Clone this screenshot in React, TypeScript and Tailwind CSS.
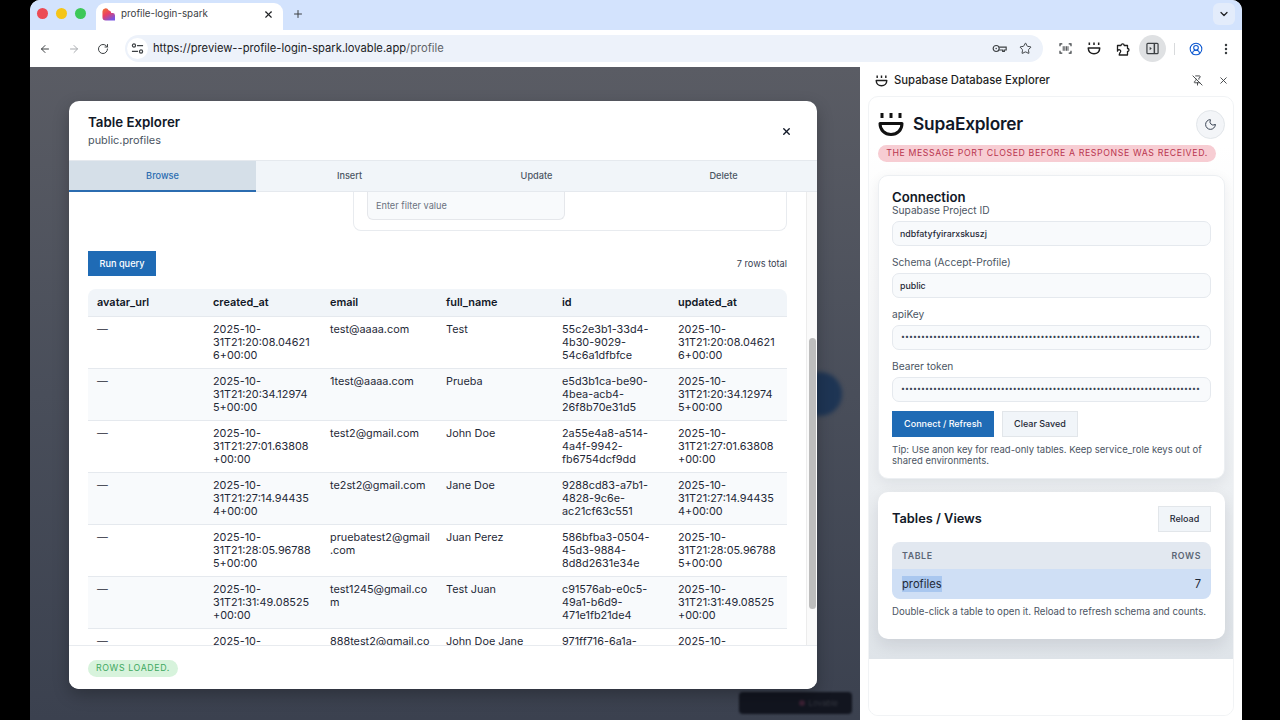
import { ArrowLeft, ArrowRight, ChevronDown, MoreVertical, Moon, PinOff, Plus, RotateCw, Star, X, CircleUserRound } from "lucide-react";

const ROWS = [
  { created: "2025-10-31T21:20:08.046216+00:00", email: "test@aaaa.com", name: "Test", id: "55c2e3b1-33d4-4b30-9029-54c6a1dfbfce" },
  { created: "2025-10-31T21:20:34.129745+00:00", email: "1test@aaaa.com", name: "Prueba", id: "e5d3b1ca-be90-4bea-acb4-26f8b70e31d5" },
  { created: "2025-10-31T21:27:01.63808+00:00", email: "test2@gmail.com", name: "John Doe", id: "2a55e4a8-a514-4a4f-9942-fb6754dcf9dd" },
  { created: "2025-10-31T21:27:14.944354+00:00", email: "te2st2@gmail.com", name: "Jane Doe", id: "9288cd83-a7b1-4828-9c6e-ac21cf63c551" },
  { created: "2025-10-31T21:28:05.967885+00:00", email: "pruebatest2@gmail.com", name: "Juan Perez", id: "586bfba3-0504-45d3-9884-8d8d2631e34e" },
  { created: "2025-10-31T21:31:49.08525+00:00", email: "test1245@gmail.com", name: "Test Juan", id: "c91576ab-e0c5-49a1-b6d9-471e1fb21de4" },
  { created: "2025-10-31T21:33:12.50412+00:00", email: "888test2@gmail.com", name: "John Doe Jane", id: "971ff716-6a1a-4c02-8e11-0f3b7c2d9a10" },
];

const COLUMNS = ["avatar_url", "created_at", "email", "full_name", "id", "updated_at"];

const TABS = ["Browse", "Insert", "Update", "Delete"];

const DOTS = "•".repeat(75);

function PlugLogo({ className }: { className: string }) {
  return (
    <svg viewBox="0 0 26 25" fill="none" stroke="currentColor" className={className} aria-hidden>
      <path d="M2 11.5h22c0 6.5-4.6 11-11 11s-11-4.5-11-11Z" strokeWidth="3" strokeLinejoin="round" />
      <path d="M4 1v5M13 1v5M22 1v5" strokeWidth="3" />
    </svg>
  );
}

function Favicon() {
  return (
    <svg viewBox="0 0 14 14" className="w-[13px] h-[13px]" aria-hidden>
      <defs>
        <linearGradient id="lovable" x1="0" y1="0" x2="0.6" y2="1">
          <stop offset="0" stopColor="#f0742f" />
          <stop offset="0.5" stopColor="#ea3f63" />
          <stop offset="1" stopColor="#7a55e0" />
        </linearGradient>
      </defs>
      <path d="M0.5 4a3.5 3.5 0 0 1 6.6-1.7A3.4 3.4 0 0 1 10 5.5h1.3A2.6 2.6 0 0 1 14 8v5.5H4A3.5 3.5 0 0 1 0.5 10Z" fill="url(#lovable)" />
    </svg>
  );
}

function TuneIcon() {
  return (
    <svg viewBox="0 0 14 14" fill="none" stroke="#3c4043" strokeWidth="1.3" className="w-[13px] h-[13px]" aria-hidden>
      <circle cx="3.2" cy="3.8" r="1.7" />
      <path d="M6.5 3.8h6.5M1 10.2h6.5" />
      <circle cx="10.8" cy="10.2" r="1.7" />
    </svg>
  );
}

function KeyIcon() {
  return (
    <svg viewBox="0 0 18 12" fill="none" stroke="#3c4043" strokeWidth="1.4" className="w-[15px] h-[11px]" aria-hidden>
      <circle cx="5" cy="6" r="3.6" />
      <circle cx="5" cy="6" r="0.9" fill="#3c4043" stroke="none" />
      <path d="M8.6 4.4H17v3.4h-2.2v1.6h-2V7.8H8.6" />
    </svg>
  );
}

function ScanIcon() {
  return (
    <svg viewBox="0 0 14 12" fill="none" stroke="#3c4043" strokeWidth="1.3" className="w-[13px] h-[11px]" aria-hidden>
      <path d="M3.5 1H1v2.5M10.5 1H13v2.5M3.5 11H1V8.5M10.5 11H13V8.5" />
      <path d="M4.5 3.5v5M6.3 3.5v5M8 3.5v5M9.7 3.5v5" strokeWidth="1" />
    </svg>
  );
}

function ExtensionIcon() {
  return (
    <svg viewBox="0 0 14 14" fill="none" stroke="#1f1f1f" strokeWidth="1.3" strokeLinejoin="round" className="w-[14px] h-[14px]" aria-hidden>
      <path d="M1.5 3.5H5a1.6 1.6 0 1 1 3.2 0h3.3v3a1.5 1.5 0 1 1 0 3v3.5H3.2l.6-2.2a1.6 1.6 0 1 0-2.3-1.6Z" />
    </svg>
  );
}

function SidePanelIcon() {
  return (
    <svg viewBox="0 0 14 14" fill="none" stroke="#3c4043" strokeWidth="1.3" className="w-[13px] h-[13px]" aria-hidden>
      <rect x="1" y="1.5" width="12" height="11" rx="1" />
      <path d="M9 1.5v11" strokeWidth="1.6" />
      <path d="M4 5l2.2 2L4 9Z" fill="#3c4043" stroke="none" />
    </svg>
  );
}

function BrowserChrome() {
  return (
    <>
      {/* Tab strip */}
      <div className="h-[30px] shrink-0 bg-[#d3e3fd] flex items-end px-[7px]">
        <div className="flex items-center gap-[8px] h-[30px] pb-[3px]">
          <span className="w-[11px] h-[11px] rounded-full bg-[#ec4b55]" />
          <span className="w-[11px] h-[11px] rounded-full bg-[#f5c518]" />
          <span className="w-[11px] h-[11px] rounded-full bg-[#3dc858]" />
        </div>
        <div className="ml-[10px] w-[187px] h-[27px] bg-white rounded-t-[9px] flex items-center pl-[6px] pr-[9px] pb-[5px]">
          <Favicon />
          <span className="ml-[6px] text-[9.8px] text-[#3c4043] flex-1">profile-login-spark</span>
          <X className="w-[11px] h-[11px] text-[#202124]" strokeWidth={2.5} />
        </div>
        <Plus className="ml-[9px] mb-[10px] w-[12px] h-[12px] text-[#3c4043]" strokeWidth={2} />
        <div className="ml-auto mb-[5px] w-[22px] h-[22px] rounded-[6px] bg-[#e3ecfb] flex items-center justify-center">
          <ChevronDown className="w-[12px] h-[12px] text-[#202124]" strokeWidth={2.5} />
        </div>
      </div>
      {/* Toolbar */}
      <div className="h-[37px] shrink-0 bg-white flex items-center pl-[9px]">
        <ArrowLeft className="w-[12px] h-[12px] text-[#3c4043]" strokeWidth={2} />
        <ArrowRight className="ml-[17px] w-[12px] h-[12px] text-[#a8abaf]" strokeWidth={2} />
        <RotateCw className="ml-[17px] w-[12px] h-[12px] text-[#3c4043]" strokeWidth={2} />
        <div className="ml-[16px] w-[918px] h-[27px] rounded-full bg-[#edf2fa] flex items-center pl-[2px] pr-[11px]">
          <span className="w-[21px] h-[21px] rounded-full bg-white flex items-center justify-center">
            <TuneIcon />
          </span>
          <span className="ml-[5px] text-[11.2px] text-[#202124] flex-1">
            https://preview--profile-login-spark.lovable.app<span className="text-[#5f6368]">/profile</span>
          </span>
          <KeyIcon />
          <Star className="ml-[12px] w-[13px] h-[13px] text-[#3c4043]" strokeWidth={1.8} />
        </div>
        <div className="ml-[16px] flex items-center">
          <ScanIcon />
          <PlugLogo className="ml-[15px] w-[14px] h-[13px] text-[#1f1f1f]" />
          <span className="ml-[15px]">
            <ExtensionIcon />
          </span>
          <span className="ml-[9px] w-[27px] h-[27px] rounded-full bg-[#dfe1e3] flex items-center justify-center">
            <SidePanelIcon />
          </span>
          <span className="ml-[8px] w-px h-[12px] bg-[#d8dadc]" />
          <CircleUserRound className="ml-[14px] w-[14px] h-[14px] text-[#0b57d0]" strokeWidth={1.8} />
          <MoreVertical className="ml-[16px] w-[14px] h-[14px] text-[#3c4043]" strokeWidth={2.2} />
        </div>
      </div>
    </>
  );
}

function TableExplorer() {
  return (
    <div className="relative w-[748px] h-[588px] bg-white rounded-[10px] flex flex-col overflow-hidden shadow-[0_6px_16px_rgba(0,0,0,0.25)]">
      <div className="h-[59px] shrink-0 flex items-start justify-between pl-[19px] pr-[25px] pt-[13px]">
        <div>
          <h2 className="text-[13.3px] leading-[17px] font-semibold text-[#111827]">Table Explorer</h2>
          <p className="text-[10.9px] leading-[16px] mt-[1px] text-[#4b5563]">public.profiles</p>
        </div>
        <X className="mt-[12px] w-[11px] h-[11px] text-[#111827]" strokeWidth={3} />
      </div>

      {/* Tabs */}
      <div className="h-[32px] shrink-0 grid grid-cols-4 bg-[#f1f5f9] border-t border-b border-[#e5e9ee]">
        {TABS.map((tab, i) => (
          <div
            key={tab}
            className={
              i === 0
                ? "flex items-center justify-center text-[9.2px] font-medium text-[#2b6cb0] bg-[#d5dfe8] border-b-2 border-[#2b6cb0] -mb-px"
                : "flex items-center justify-center text-[9.2px] font-medium text-[#4b5563]"
            }
          >
            {tab}
          </div>
        ))}
      </div>

      {/* Scrolled body */}
      <div className="relative flex-1 overflow-hidden pl-[19px] pr-[30px]">
        <div className="ml-[265px] h-[39px] border-l border-r border-b border-[#e8ebef] rounded-b-[8px] pl-[13px]">
          <div className="w-[198px] h-[28px] bg-[#f8fafc] border-l border-r border-b border-[#e5e7eb] rounded-b-[6px] flex items-center pl-[8px] text-[9.2px] text-[#6b7280]">
            Enter filter value
          </div>
        </div>
        <div className="mt-[20px] flex items-center justify-between">
          <button className="w-[68px] h-[25px] bg-[#1f6bb5] text-white text-[9.2px] font-medium">Run query</button>
          <span className="text-[9.2px] text-[#374151]">7 rows total</span>
        </div>
        <div className="mt-[13px] rounded-t-[8px] overflow-hidden">
          <table className="w-full table-fixed text-[10.85px] leading-[13px] text-[#1f2937]">
            <colgroup>
              <col className="w-[116px]" />
              <col className="w-[117px]" />
              <col className="w-[116px]" />
              <col className="w-[116px]" />
              <col className="w-[116px]" />
              <col className="w-[118px]" />
            </colgroup>
            <thead>
              <tr className="h-[27px] bg-[#f1f5f9] border-b border-[#e5e9ee]">
                {COLUMNS.map((col) => (
                  <th key={col} className="px-[9px] text-left font-semibold text-[10.9px] text-[#111827]">
                    {col}
                  </th>
                ))}
              </tr>
            </thead>
            <tbody>
              {ROWS.map((row, i) => (
                <tr key={row.id} className={i % 2 ? "bg-[#f8fafc] border-b border-[#e5e9ee]" : "bg-white border-b border-[#e5e9ee]"}>
                  <td className="px-[9px] pt-[6px] pb-[6px] h-[52px] align-top">—</td>
                  <td className="px-[9px] pt-[6px] pb-[6px] align-top [overflow-wrap:anywhere]">{row.created}</td>
                  <td className="pl-[9px] pr-[6px] pt-[6px] pb-[6px] align-top [overflow-wrap:anywhere]">{row.email}</td>
                  <td className="px-[9px] pt-[6px] pb-[6px] align-top">{row.name}</td>
                  <td className="px-[9px] pt-[6px] pb-[6px] align-top [overflow-wrap:anywhere]">{row.id}</td>
                  <td className="pl-[9px] pr-[11px] pt-[6px] pb-[6px] align-top [overflow-wrap:anywhere]">{row.created}</td>
                </tr>
              ))}
            </tbody>
          </table>
        </div>
        {/* Scrollbar */}
        <div className="absolute right-0 top-0 bottom-0 w-[11px] bg-[#fafafa] border-l border-[#ececec]">
          <div className="absolute left-[2px] top-[146px] w-[7px] h-[271px] rounded-full bg-[#bdbdbd]" />
        </div>
      </div>

      <div className="h-[44px] shrink-0 bg-white border-t border-[#e8ebef] flex items-center pl-[19px] pt-[1px]">
        <span className="h-[17px] px-[8px] rounded-full bg-[#d7f3dc] flex items-center text-[8.8px] tracking-[0.07em] text-[#3ea860]">
          ROWS LOADED.
        </span>
      </div>
    </div>
  );
}

function Field({ label, value, secret }: { label: string; value: string; secret?: boolean }) {
  return (
    <div className="mb-[9px]">
      <label className="block text-[10.2px] leading-[14px] text-[#4b5563]">{label}</label>
      <div
        className={
          secret
            ? "mt-[4px] h-[25px] rounded-[7px] bg-[#f8fafc] border border-[#e5e9ee] flex items-center pl-[8px] text-[7px] tracking-[0.05px] text-[#374151] overflow-hidden whitespace-nowrap"
            : "mt-[4px] h-[25px] rounded-[7px] bg-[#f8fafc] border border-[#e5e9ee] flex items-center pl-[7px] text-[8.8px] font-medium text-[#1f2937]"
        }
      >
        {value}
      </div>
    </div>
  );
}

function SidePanel() {
  return (
    <div className="w-[382px] shrink-0 bg-white flex flex-col">
      <div className="h-[26px] shrink-0 flex items-center pl-[15px] pr-[13px] pt-[1px]">
        <PlugLogo className="w-[13px] h-[12px] text-[#1f1f1f]" />
        <span className="ml-[6px] text-[11.3px] font-medium text-[#1f1f1f] flex-1">Supabase Database Explorer</span>
        <PinOff className="w-[11px] h-[11px] text-[#3c4043]" strokeWidth={2} />
        <X className="ml-[15px] w-[11px] h-[11px] text-[#3c4043]" strokeWidth={2} />
      </div>
      <div className="flex-1 mx-[8px] mt-[3px] mb-[4px] rounded-[10px] border border-[#f1f3f5] flex flex-col overflow-hidden">
        <div className="h-[48px] shrink-0 flex items-center pl-[9px] pr-[8px] pt-[6px]">
          <PlugLogo className="w-[26px] h-[25px] text-[#111]" />
          <span className="ml-[9px] text-[17.3px] font-semibold tracking-[-0.2px] text-[#111827] flex-1">SupaExplorer</span>
          <span className="w-[29px] h-[29px] rounded-full bg-[#f3f5f8] border border-[#e2e6ea] flex items-center justify-center">
            <Moon className="w-[13px] h-[13px] text-[#374151]" strokeWidth={1.8} />
          </span>
        </div>
        <div className="flex-1 flex flex-col bg-gradient-to-b from-white via-[#f2f4f6] to-[#dfe4e9]">
          <div className="ml-[9px] w-[338px] h-[17px] rounded-full bg-[#f7cdd3] flex items-center justify-center text-[8.75px] tracking-[0.07em] text-[#b9354f] whitespace-nowrap">
            THE MESSAGE PORT CLOSED BEFORE A RESPONSE WAS RECEIVED.
          </div>
          <div className="ml-[9px] mr-[8px] mt-[13px] h-[304px] bg-white rounded-[10px] border border-[#eceff2] px-[13px] pt-[13px] shadow-[0_4px_14px_rgba(15,23,42,0.07)]">
            <h3 className="text-[13.2px] leading-[16px] font-semibold text-[#111827]">Connection</h3>
            <div className="mt-[-2px]">
              <Field label="Supabase Project ID" value="ndbfatyfyirarxskuszj" />
              <Field label="Schema (Accept-Profile)" value="public" />
              <Field label="apiKey" value={DOTS} secret />
              <Field label="Bearer token" value={DOTS} secret />
            </div>
            <div className="flex gap-[8px] mt-[8px]">
              <button className="w-[102px] h-[26px] bg-[#1f6bb5] text-white text-[9px] font-medium">Connect / Refresh</button>
              <button className="w-[76px] h-[26px] bg-[#f1f5f9] border border-[#e2e6ea] text-[#1f2937] text-[9px] font-medium">Clear Saved</button>
            </div>
            <p className="mt-[7px] text-[9.5px] leading-[11px] text-[#4b5563]">
              Tip: Use anon key for read-only tables. Keep service_role keys out of shared environments.
            </p>
          </div>
          <div className="ml-[9px] mr-[8px] mt-[13px] mb-[20px] h-[147px] bg-white rounded-[10px] px-[14px] pt-[14px] shadow-[0_6px_16px_rgba(15,23,42,0.1)]">
            <div className="flex items-center justify-between">
              <h3 className="text-[12.8px] font-semibold text-[#111827]">Tables / Views</h3>
              <button className="w-[53px] h-[26px] bg-[#f1f5f9] border border-[#e2e6ea] text-[9px] font-medium text-[#1f2937]">Reload</button>
            </div>
            <div className="mt-[10px] rounded-[8px] overflow-hidden">
              <div className="h-[27px] bg-[#e2e8f0] flex items-center justify-between px-[10px] text-[8.8px] font-semibold tracking-[0.07em] text-[#5b6675]">
                <span>TABLE</span>
                <span>ROWS</span>
              </div>
              <div className="h-[30px] bg-[#cfdff5] flex items-center justify-between px-[10px] text-[11.2px] text-[#1f2937]">
                <span className="bg-[#a9c7ef]">profiles</span>
                <span>7</span>
              </div>
            </div>
            <p className="mt-[6px] text-[9.65px] text-[#4b5563] whitespace-nowrap">
              Double-click a table to open it. Reload to refresh schema and counts.
            </p>
          </div>
        </div>
        <div className="h-[57px] shrink-0 bg-white" />
      </div>
    </div>
  );
}

export default function App() {
  return (
    <div className="w-[1280px] h-[720px] bg-black flex justify-start pl-[30px] overflow-hidden font-['Inter',sans-serif]">
      <div className="w-[1212px] h-[720px] rounded-t-[10px] overflow-hidden flex flex-col bg-white">
        <BrowserChrome />
        <div className="flex-1 flex min-h-0">
          <div className="relative w-[830px] shrink-0 bg-gradient-to-b from-[#5a5c64] via-[#494e5a] to-[#3b414f] pl-[39px] pt-[34px]">
            {/* Blurred page bits behind the overlay */}
            <div className="absolute left-[768px] top-[305px] w-[44px] h-[44px] rounded-full bg-[#1e3554] blur-[2px]" />
            <div className="absolute left-[709px] top-[625px] w-[113px] h-[22px] rounded-[4px] bg-[#12151f] blur-[1px] flex items-center justify-end gap-[3px] pr-[14px] text-[8px] text-[#34363f]">
              <span className="w-[6px] h-[6px] rounded-full bg-[#3a2033]" />
              Lovable
            </div>
            <TableExplorer />
          </div>
          <SidePanel />
        </div>
      </div>
    </div>
  );
}
